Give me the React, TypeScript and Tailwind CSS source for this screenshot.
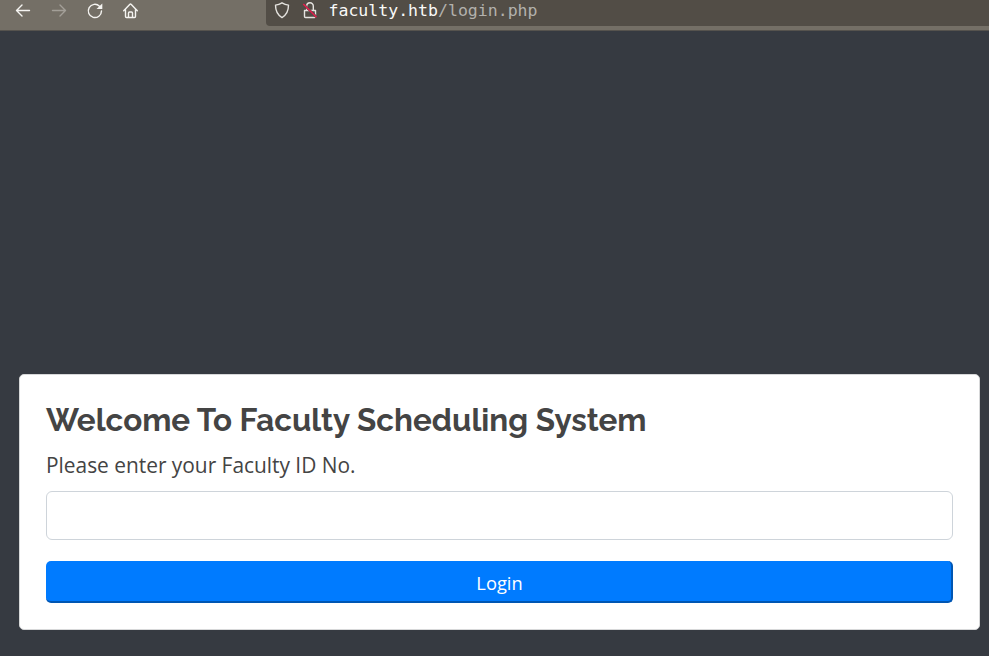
function Toolbar() {
  return (
    <header className="flex h-[31px] shrink-0 border-b border-[#56534e] bg-[#746f66]">
      <nav className="flex h-[22px] w-[266px] shrink-0 items-center">
        <svg className="h-[22px] w-[150px]" viewBox="0 0 150 22" fill="none" stroke="#f5f4f1" strokeWidth="1.4" strokeLinecap="round" strokeLinejoin="round">
          <path d="M29.5 10.5H16.5M22 5l-5.5 5.5L22 16" />
          <path stroke="#a39f98" d="M52.500 10.500h13M60 5l5.500 5.500L60 16" />
          <path d="M99.500 6.200A6.600 6.600 0 1 0 101.500 11" />
          <path fill="#f5f4f1" stroke="none" d="M102.300 3.600v5.400h-5.800z" />
          <path d="M123.700 10.800l6-6.300q.8-.8 1.600 0l6 6.300M125.500 9.500v7a1 1 0 0 0 1 1h8a1 1 0 0 0 1-1v-7M128.500 17.500v-4.500a1 1 0 0 1 1-1h2a1 1 0 0 1 1 1v4.500" />
        </svg>
      </nav>
      <div className="flex h-[26px] flex-1 items-start rounded-bl-[4px] bg-[#524d46]">
        <svg className="h-[22px] w-[62.500px] shrink-0" viewBox="0 0 62.5 22" fill="none" stroke="#e5e3df" strokeWidth="1.4" strokeLinejoin="round">
          <path d="M16 2.800c-2 1.200-4.300 2-6.500 2.300 0 5.600 1.500 9.700 6.500 12.500 5-2.800 6.500-6.900 6.500-12.500C20.300 4.800 18 4 16 2.800z" />
          <path d="M38.500 10.500h11v6a1 1 0 0 1-1 1h-9a1 1 0 0 1-1-1zM40.700 10.500V6a3.300 3.300 0 0 1 6.600 0v4.500" />
          <path stroke="#524d46" strokeWidth="2.4" d="M37.300 4l13.200 13.200" />
          <path stroke="#e81c4e" strokeWidth="1.5" d="M37.300 4l13.200 13.200" />
        </svg>
        <span className="font-['DejaVu_Sans_Mono',monospace] text-[16.55px] leading-[21px] text-[#f9f9f8]">
          faculty.htb<span className="text-[#b3b1ad]">/login.php</span>
        </span>
      </div>
    </header>
  );
}

export default function App() {
  return (
    <div className="flex h-[656px] flex-col overflow-hidden bg-[#363a41]">
      <Toolbar />
      <main className="flex flex-1 flex-col justify-end pr-[9px] pb-[26px] pl-[19px] font-['Open_Sans',sans-serif] text-[#444444]">
        <form className="flex h-[256px] flex-col rounded-[5px] border border-[#d7d8d9] bg-white px-[26px] pt-[25px]" onSubmit={(e) => e.preventDefault()}>
          <h1 className="h-[40px] font-['Raleway','Lato',sans-serif] text-[31.38px] leading-[40px] font-bold whitespace-nowrap">
            Welcome To Faculty Scheduling System
          </h1>
          <label htmlFor="faculty-id" className="mt-[9px] h-[32px] text-[20.9px] leading-[32px] tracking-[-0.01px] whitespace-nowrap">
            Please enter your Faculty ID No.
          </label>
          <input id="faculty-id" className="mt-[10px] h-[49px] rounded-[6px] border border-[#ced4da] bg-white px-4 text-lg outline-none" />
          <button type="submit" className="mt-[21px] h-[42px] rounded-[5px] border-r-2 border-b-2 border-[#0056b3] bg-[#007bff] pt-[4px] pl-[2px] text-[18.3px] leading-none text-white">
            Login
          </button>
        </form>
      </main>
    </div>
  );
}
